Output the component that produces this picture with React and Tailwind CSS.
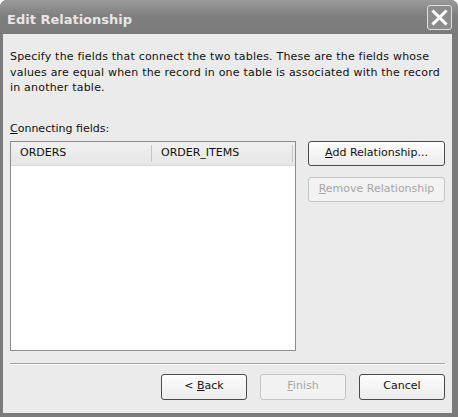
export default function App() {
  const btn =
    "flex items-center justify-center rounded-[3px] border border-[#4a4a4a] bg-gradient-to-b from-[#fdfdfd] to-[#ececec] text-[#111]";
  const btnOff =
    "flex items-center justify-center rounded-[3px] border border-[#c4c4c4] bg-[#f2f2f2] text-[#a6a6a6]";

  return (
    <div
      className="w-[458px] h-[417px] flex flex-col bg-[#7b7b7b] rounded-t-[7px] overflow-hidden"
      style={{ fontFamily: '"DejaVu Sans", sans-serif' }}
    >
      {/* title bar */}
      <div className="h-[34px] shrink-0 flex items-center justify-between pl-[7px] pr-[6px] bg-gradient-to-b from-[#9a9a9a] via-[#7e7e7e] to-[#7a7a7a]">
        <span className="text-[13px] font-bold text-[#e6e6e6] mt-[6px]">
          Edit Relationship
        </span>
        <div className="w-[25px] h-[25px] rounded-[3px] border border-[#e0e0e0] bg-[#8c8c8c] flex items-center justify-center mt-[1px]">
          <svg width="17" height="17" viewBox="0 0 17 17">
            <path d="M2.5 2.5 L14.5 14.5 M14.5 2.5 L2.5 14.5" stroke="#fff" strokeWidth="3" strokeLinecap="square" />
          </svg>
        </div>
      </div>

      {/* client area */}
      <div className="flex-1 ml-[3px] mr-[6px] mb-[4px] bg-[#ebebeb] flex flex-col px-[7px] text-[11px] text-[#111]">
        <p className="mt-[15px] leading-[15.5px] tracking-[0.2px]">
          Specify the fields that connect the two tables. These are the fields whose values are equal when the record in one table is associated with the record in another table.
        </p>
        <div className="mt-[26px] leading-[14px]">
          <span className="underline">C</span>onnecting fields:
        </div>

        <div className="flex mt-[5px] gap-[12px]">
          <div className="w-[287px] h-[210px] border border-[#8c8c8c] bg-white flex flex-col">
            <div className="h-[24px] flex bg-gradient-to-b from-[#f0f0f0] to-[#e6e6e6] border-b border-[#d6d6d6]">
              <div className="w-[141px] flex items-center pl-[9px] border-r border-[#c6c6c6] my-[3px]">ORDERS</div>
              <div className="w-[141px] flex items-center pl-[9px] border-r border-[#c6c6c6] my-[3px]">ORDER_ITEMS</div>
            </div>
          </div>

          <div className="flex flex-col gap-[11px]">
            <div className={`${btn} w-[137px] h-[25px]`}>
              <span><span className="underline">A</span>dd Relationship...</span>
            </div>
            <div className={`${btnOff} w-[137px] h-[25px]`}>
              <span><span className="underline">R</span>emove Relationship</span>
            </div>
          </div>
        </div>

        <div className="mt-[12px] h-[2px] border-t border-[#a4a4a4] border-b border-b-white" />

        <div className="flex justify-end gap-[13px] mt-[9px]">
          <div className={`${btn} w-[86px] h-[26px]`}>
            <span>&lt; <span className="underline">B</span>ack</span>
          </div>
          <div className={`${btnOff} w-[86px] h-[26px]`}>
            <span><span className="underline">F</span>inish</span>
          </div>
          <div className={`${btn} w-[86px] h-[26px]`}>
            <span>Cancel</span>
          </div>
        </div>
      </div>
    </div>
  );
}
